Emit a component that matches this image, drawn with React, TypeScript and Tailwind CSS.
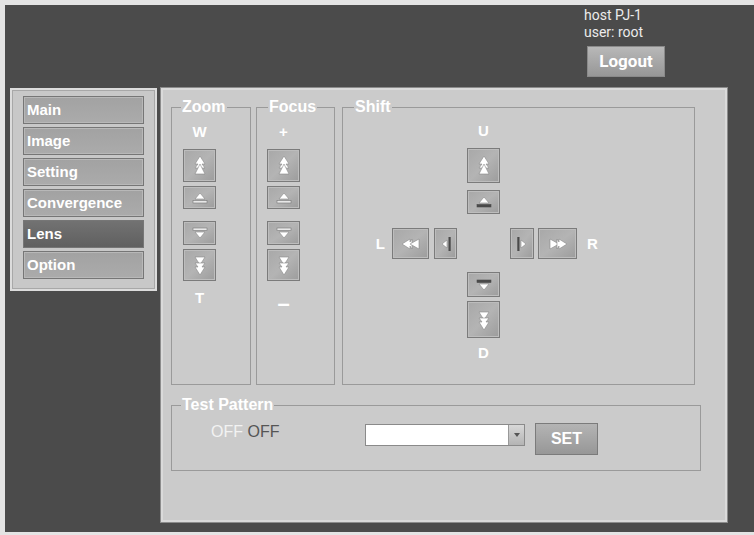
import React from "react";

type IconKind =
  | "upFast"
  | "up"
  | "down"
  | "downFast"
  | "leftFast"
  | "left"
  | "right"
  | "rightFast";

const MENU = ["Main", "Image", "Setting", "Convergence", "Lens", "Option"];

function Glyph({ kind, darkBar }: { kind: IconKind; darkBar?: boolean }) {
  const bar = darkBar ? "#4a4a4a" : "#e8e8e8";
  const barStroke = darkBar ? "#4a4a4a" : "#777";
  switch (kind) {
    case "upFast":
      return (
        <svg width="14" height="22" viewBox="0 0 14 22">
          <path d="M7 1 L12 9 L9 9 L12 13 L2 13 L5 9 L2 9 Z" fill="#fff" stroke="#888" strokeWidth="0.6" />
          <path d="M7 9 L12 19 L2 19 Z" fill="#fff" stroke="#888" strokeWidth="0.6" />
        </svg>
      );
    case "downFast":
      return (
        <svg width="14" height="22" viewBox="0 0 14 22">
          <path d="M2 3 L12 3 L7 11 Z" fill="#fff" stroke="#888" strokeWidth="0.6" />
          <path d="M2 9 L12 9 L9 13 L12 13 L7 21 L2 13 L5 13 Z" fill="#fff" stroke="#888" strokeWidth="0.6" />
        </svg>
      );
    case "up":
      return (
        <svg width="18" height="14" viewBox="0 0 18 14">
          <path d="M9 2 L14 8 L4 8 Z" fill="#fff" stroke="#888" strokeWidth="0.6" />
          <rect x="2" y="9.5" width="14" height="2.5" fill={bar} stroke={barStroke} strokeWidth="0.6" />
        </svg>
      );
    case "down":
      return (
        <svg width="18" height="14" viewBox="0 0 18 14">
          <rect x="2" y="2" width="14" height="2.5" fill={bar} stroke={barStroke} strokeWidth="0.6" />
          <path d="M4 6 L14 6 L9 12 Z" fill="#fff" stroke="#888" strokeWidth="0.6" />
        </svg>
      );
    case "leftFast":
      return (
        <svg width="20" height="12" viewBox="0 0 20 12">
          <path d="M1 6 L9 1 L9 4 L11 1 L11 11 L9 8 L9 11 Z" fill="#fff" stroke="#888" strokeWidth="0.6" />
          <path d="M9 6 L18 1 L18 11 Z" fill="#fff" stroke="#888" strokeWidth="0.6" />
        </svg>
      );
    case "rightFast":
      return (
        <svg width="20" height="12" viewBox="0 0 20 12">
          <path d="M2 1 L11 6 L2 11 Z" fill="#fff" stroke="#888" strokeWidth="0.6" />
          <path d="M9 1 L11 4 L11 1 L19 6 L11 11 L11 8 L9 11 Z" fill="#fff" stroke="#888" strokeWidth="0.6" />
        </svg>
      );
    case "left":
      return (
        <svg width="12" height="18" viewBox="0 0 12 18">
          <path d="M2 9 L7 5 L7 13 Z" fill="#fff" stroke="#888" strokeWidth="0.6" />
          <rect x="8.5" y="2" width="2.2" height="14" fill="#4a4a4a" />
        </svg>
      );
    case "right":
      return (
        <svg width="12" height="18" viewBox="0 0 12 18">
          <rect x="1.3" y="2" width="2.2" height="14" fill="#4a4a4a" />
          <path d="M5 5 L10 9 L5 13 Z" fill="#fff" stroke="#888" strokeWidth="0.6" />
        </svg>
      );
  }
}

function IconButton({
  kind,
  className,
  darkBar,
}: {
  kind: IconKind;
  className: string;
  darkBar?: boolean;
}) {
  return (
    <button
      className={`flex items-center justify-center border border-[#7b7b7b] bg-linear-to-br from-[#a8a8a8] via-[#b4b4b4] to-[#9c9c9c] shadow-[inset_0_0_0_1px_#bdbdbd] ${className}`}
    >
      <Glyph kind={kind} darkBar={darkBar} />
    </button>
  );
}

function Label({
  children,
  className = "",
  size = "text-[15px]",
}: {
  children: React.ReactNode;
  className?: string;
  size?: string;
}) {
  return <span className={`${size} leading-[16px] font-bold text-white ${className}`}>{children}</span>;
}

function Legend({ children, className = "ml-[9px]" }: { children: React.ReactNode; className?: string }) {
  return (
    <legend className={`px-[1px] text-[16px] leading-[16px] font-bold text-white ${className}`}>
      {children}
    </legend>
  );
}

function VerticalPad({
  top,
  bottom,
  bottomClass,
  bottomSize,
}: {
  top: string;
  bottom: string;
  bottomClass: string;
  bottomSize?: string;
}) {
  return (
    <div className="flex w-[33px] flex-col items-center">
      <Label className="mt-[9px]">{top}</Label>
      <IconButton kind="upFast" className="mt-[9px] h-[33px] w-[33px]" />
      <IconButton kind="up" className="mt-[4px] h-[23px] w-[33px]" />
      <IconButton kind="down" className="mt-[12px] h-[24px] w-[33px]" />
      <IconButton kind="downFast" className="mt-[4px] h-[32px] w-[33px]" />
      <Label className={bottomClass} size={bottomSize}>
        {bottom}
      </Label>
    </div>
  );
}

export default function App() {
  return (
    <div className="h-[535px] w-[754px] bg-[#e4e4e4] pl-[5px] pt-[5px] font-['Liberation_Sans',Arial,sans-serif]">
      <div className="h-[527px] w-[749px] bg-[#4b4b4b]">
        {/* Header */}
        <header className="flex h-[83px] flex-col pl-[579px] pt-[2px] font-['Roboto',sans-serif] text-[14px] leading-[17px] text-[#ececec]">
          <span>host PJ-1</span>
          <span>user: root</span>
          <button className="mt-[5px] ml-[3px] h-[31px] w-[78px] border border-[#8a8a8a] bg-linear-to-b from-[#b8b8b8] to-[#979797] text-[17px] font-bold text-white">
            Logout
          </button>
        </header>

        <div className="flex items-start">
          {/* Side menu */}
          <nav className="ml-[5px] flex h-[203px] w-[147px] flex-col gap-[3px] border-2 border-[#dcdcdc] bg-[#c8c8c8] pl-[11px] pt-[6px] shadow-[inset_0_0_0_1px_#a8a8a8]">
            {MENU.map((item) => (
              <button
                key={item}
                className={`h-[28px] w-[121px] border border-[#767676] pl-[3px] text-left text-[15px] font-bold text-white ${
                  item === "Lens"
                    ? "bg-linear-to-b from-[#727272] to-[#606060]"
                    : "bg-linear-to-b from-[#a2a2a2] to-[#ababab] shadow-[inset_0_0_0_1px_#b8b8b8]"
                }`}
              >
                {item}
              </button>
            ))}
          </nav>

          {/* Lens panel */}
          <main className="ml-[4px] h-[434px] w-[566px] border-2 border-[#dadada] bg-[#cbcbcb] pl-[8px] pt-[9px] shadow-[0_0_0_1px_#8c8c8c]">
            <div className="flex items-start">
              <fieldset className="h-[286px] w-[80px] border border-[#9a9a9a]">
                <Legend>Zoom</Legend>
                <div className="pl-[11px]">
                  <VerticalPad top="W" bottom="T" bottomClass="mt-[9px]" />
                </div>
              </fieldset>

              <fieldset className="ml-[5px] h-[286px] w-[79px] border border-[#9a9a9a]">
                <Legend className="ml-[11px]">Focus</Legend>
                <div className="pl-[10px]">
                  <VerticalPad top="+" bottom="–" bottomClass="mt-[15px]" bottomSize="text-[22px]" />
                </div>
              </fieldset>

              <fieldset className="ml-[7px] h-[286px] w-[353px] border border-[#9a9a9a]">
                <Legend className="ml-[11px]">Shift</Legend>
                <div className="ml-[14px] flex w-[253px] flex-col items-center">
                  <Label className="mt-[8px]">U</Label>
                  <IconButton kind="upFast" darkBar className="mt-[9px] h-[35px] w-[33px]" />
                  <IconButton kind="up" darkBar className="mt-[7px] h-[24px] w-[33px]" />
                  <div className="mt-[14px] flex h-[31px] w-[253px] items-center">
                    <div className="flex w-[100px] items-center justify-end">
                      <Label>L</Label>
                      <IconButton kind="leftFast" className="ml-[7px] h-[31px] w-[37px]" />
                      <IconButton kind="left" className="ml-[5px] h-[31px] w-[23px]" />
                    </div>
                    <div className="w-[53px]" />
                    <div className="flex w-[100px] items-center">
                      <IconButton kind="right" className="h-[31px] w-[24px]" />
                      <IconButton kind="rightFast" className="ml-[4px] h-[31px] w-[39px]" />
                      <Label className="ml-[10px]">R</Label>
                    </div>
                  </div>
                  <IconButton kind="down" darkBar className="mt-[13px] h-[25px] w-[33px]" />
                  <IconButton kind="downFast" darkBar className="mt-[4px] h-[37px] w-[33px]" />
                  <Label className="mt-[7px]">D</Label>
                </div>
              </fieldset>
            </div>

            <fieldset className="mt-[12px] h-[74px] w-[530px] border border-[#9a9a9a]">
              <Legend>Test Pattern</Legend>
              <div className="flex items-start pl-[39px]">
                <div className="mt-[10px] w-[154px] text-[16px] leading-[18px]">
                  <span className="text-[#f2f2f2]">OFF</span> <span className="text-[#555]">OFF</span>
                </div>
                <div className="mt-[11px] flex h-[22px] w-[160px] border border-[#8a8a8a] bg-white">
                  <div className="flex-1" />
                  <div className="flex w-[16px] items-center justify-center border-l border-[#999] bg-linear-to-b from-[#d8d8d8] to-[#b4b4b4]">
                    <svg width="6" height="4" viewBox="0 0 6 4">
                      <path d="M0 0 L6 0 L3 4 Z" fill="#555" />
                    </svg>
                  </div>
                </div>
                <button className="mt-[10px] ml-[10px] h-[32px] w-[63px] border border-[#7b7b7b] bg-linear-to-b from-[#b4b4b4] to-[#979797] text-[16px] font-bold text-white">
                  SET
                </button>
              </div>
            </fieldset>
          </main>
        </div>
      </div>
    </div>
  );
}
